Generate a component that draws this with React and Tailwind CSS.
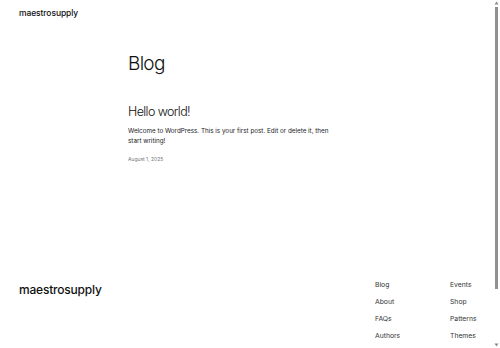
import React from 'react';

const navLeft = ['Blog', 'About', 'FAQs', 'Authors'];
const navRight = ['Events', 'Shop', 'Patterns', 'Themes'];

function Scrollbar() {
  return (
    <aside className="w-[7px] h-[348px] flex flex-col items-center bg-white">
      <svg width="5" height="4" viewBox="0 0 5 4" className="mt-[1px]">
        <path d="M2.5 0.5 L4.5 3.5 L0.5 3.5 Z" fill="#8a8a8a" />
      </svg>
      <div className="mt-[2px] w-[3px] h-[282px] bg-[#909090]" />
      <div className="flex-1" />
      <svg width="5" height="4" viewBox="0 0 5 4" className="mb-[1px]">
        <path d="M0.5 0.5 L4.5 0.5 L2.5 3.5 Z" fill="#8a8a8a" />
      </svg>
    </aside>
  );
}

export default function App() {
  return (
    <div
      className="h-[348px] flex bg-white text-[#111111] overflow-hidden"
      style={{ fontFamily: 'Inter, "Noto Sans", sans-serif' }}
    >
      <div className="flex-1 h-[348px] overflow-hidden">
        {/* header */}
        <header className="px-[19px] pt-[8px] h-[26px]">
          <div className="text-[8.5px] font-medium leading-[10px] tracking-[-0.1px]">maestrosupply</div>
        </header>

        {/* main */}
        <main className="pl-[128px] pt-[25px] h-[234px]">
          <h1 className="text-[19px] font-light leading-[26px] tracking-[-0.7px]">Blog</h1>
          <article className="mt-[26px] w-[210px]">
            <h2 className="text-[12.5px] font-light leading-[18px] tracking-[-0.6px]">Hello world!</h2>
            <p className="mt-[5px] text-[6.3px] leading-[10px] text-[#222]">
              Welcome to WordPress. This is your first post. Edit or delete it, then start writing!
            </p>
            <div className="mt-[10px] text-[5px] leading-[6px] text-[#777]">August 1, 2025</div>
          </article>
        </main>

        {/* footer */}
        <footer className="pl-[19px] pt-[20px]">
          <div className="flex">
            <div className="flex-1 pt-[3px]">
              <div className="text-[12px] font-medium leading-[14px] tracking-[-0.2px]">maestrosupply</div>
            </div>
            <div className="flex mr-[13px]">
              <ul className="w-[75px] flex flex-col gap-[7px] text-[6.8px] leading-[10px] text-[#333]">
                {navLeft.map((n) => (
                  <li key={n}>{n}</li>
                ))}
              </ul>
              <ul className="w-[30px] flex flex-col gap-[7px] text-[6.8px] leading-[10px] text-[#333]">
                {navRight.map((n) => (
                  <li key={n}>{n}</li>
                ))}
              </ul>
            </div>
          </div>
        </footer>
      </div>
      <Scrollbar />
    </div>
  );
}
